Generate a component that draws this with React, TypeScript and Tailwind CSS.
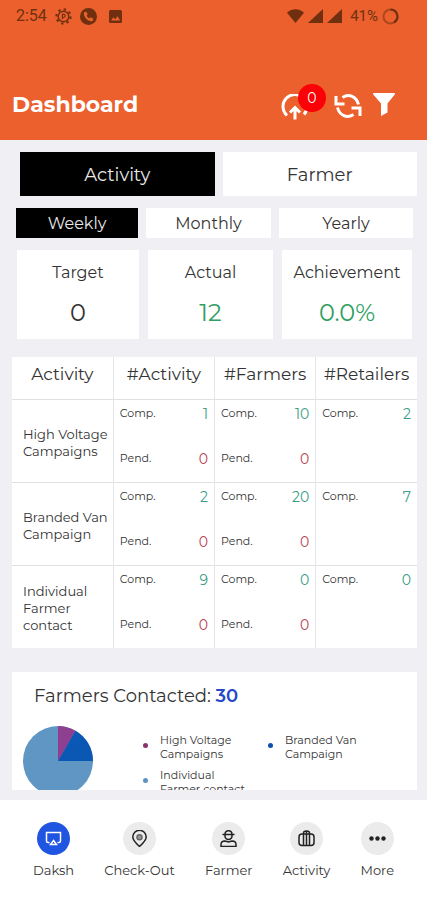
import { useState } from 'react';
import clsx from 'clsx';

const periods = ['Weekly', 'Monthly', 'Yearly'];

const summary = [
  { label: 'Target', value: '0', color: 'text-[#333333]' },
  { label: 'Actual', value: '12', color: 'text-[#2f9e62]' },
  { label: 'Achievement', value: '0.0%', color: 'text-[#2f9e62]' },
];

const rows = [
  { name: 'High Voltage Campaigns', cells: [{ comp: 1, pend: 0 }, { comp: 10, pend: 0 }, { comp: 2 }] },
  { name: 'Branded Van Campaign', cells: [{ comp: 2, pend: 0 }, { comp: 20, pend: 0 }, { comp: 7 }] },
  { name: 'Individual Farmer contact', cells: [{ comp: 9, pend: 0 }, { comp: 0, pend: 0 }, { comp: 0 }] },
];

const legend = [
  { label: 'High Voltage Campaigns', dot: 'bg-[#8a3272]' },
  { label: 'Branded Van Campaign', dot: 'bg-[#0d4fae]' },
  { label: 'Individual Farmer contact', dot: 'bg-[#5b93c4]' },
];

function StatusBar() {
  return (
    <div className="flex items-center justify-between h-8 pl-4 pr-7 text-[#70300f]">
      <div className="flex items-center gap-2">
        <span className="text-base font-['Roboto',sans-serif]">2:54</span>
        <svg width="17" height="17" viewBox="0 0 16 16" fill="none" stroke="currentColor">
          <circle cx="8" cy="8" r="5" strokeWidth="1.4" />
          <circle cx="8" cy="8" r="6.7" strokeWidth="2" strokeDasharray="2.2 3.06" />
          <path d="M7 10.5V6h1.3a1.3 1.3 0 0 1 0 2.7H7" strokeWidth="1.1" />
        </svg>
        <svg width="17" height="17" viewBox="0 0 16 16">
          <circle cx="8" cy="8" r="8" fill="currentColor" />
          <path
            d="M4.3 3.9l1.6-.5 1.3 2.7-1 1.1a6 6 0 0 0 2.6 2.6l1.1-1 2.7 1.3-.5 1.7c-.2.6-.8.8-1.4.7-3.7-.5-6.7-3.5-7.1-7.2 0-.6.2-1.2.7-1.4z"
            fill="#eb602d"
          />
        </svg>
        <svg width="13" height="13" viewBox="0 0 13 13" className="ml-1">
          <rect width="13" height="13" rx="1.5" fill="currentColor" />
          <path d="M2 10.5l2.5-3.2 1.7 2 2.3-3 2.7 4.2z" fill="#eb602d" />
        </svg>
      </div>
      <div className="flex items-center gap-1">
        <svg width="17" height="14" viewBox="0 0 17 14" fill="currentColor">
          <path d="M8.5 14L0 3.7C4.8-.8 12.2-.8 17 3.7z" />
        </svg>
        <svg width="15" height="14" viewBox="0 0 15 14" fill="currentColor">
          <path d="M15 0v14H0z" />
        </svg>
        <svg width="15" height="14" viewBox="0 0 15 14" fill="currentColor">
          <path d="M15 0v14H0z" />
        </svg>
        <span className="ml-1 text-[15px] font-['Roboto',sans-serif]">41%</span>
        <svg width="17" height="17" viewBox="0 0 17 17" fill="none" stroke="currentColor" strokeWidth="2">
          <circle cx="8.5" cy="8.5" r="7" opacity="0.5" />
          <path d="M8.5 1.5a7 7 0 0 1 3.5 13" />
        </svg>
      </div>
    </div>
  );
}

function Header() {
  return (
    <header className="bg-[#eb602d] shrink-0">
      <StatusBar />
      <div className="flex items-center justify-between h-27 pl-3 pr-8 pt-9">
        <h1 className="text-white font-bold text-[22px]">Dashboard</h1>
        <div className="flex items-center gap-[11px] text-white">
          <button aria-label="Upload" className="relative w-[43px] h-7">
            <svg width="30" height="26" viewBox="0 0 30 26" fill="none" stroke="currentColor" strokeWidth="3" className="mt-1">
              <path d="M7 21.5A12 12 0 1 1 24 20.500" />
              <path d="M15 25.500V14M10 18.500l5-5 5 5" />
            </svg>
            <span className="absolute left-[18px] -top-1.5 flex items-center justify-center w-7 h-7 rounded-full bg-[#fb0006] text-sm">
              0
            </span>
          </button>
          <button aria-label="Refresh">
            <svg width="28" height="26" viewBox="0 0 28 26" fill="none" stroke="currentColor" strokeWidth="3" className="mt-1">
              <path d="M2 3v8h8.500M26 23v-8h-8.500" />
              <path d="M8.500 4.500C15 0 22.500 3.500 24.500 11.500M19.500 21.500C13 26 5.500 22.500 3.500 14.500" />
            </svg>
          </button>
          <button aria-label="Filter">
            <svg width="22" height="23" viewBox="0 0 22 23" fill="currentColor">
              <path d="M1 0h20q1.500 0 .8 1.500L14.500 10.500v9L8 23V10.500L.2 1.500Q-.5 0 1 0z" />
            </svg>
          </button>
        </div>
      </div>
    </header>
  );
}

function Count({ label, value, color }: { label: string; value: number; color: string }) {
  return (
    <div className="flex items-center justify-between h-5">
      <span className="text-[11px] text-[#333333]">{label}</span>
      <span className={clsx('text-sm', color)}>{value}</span>
    </div>
  );
}

function ActivityTable() {
  return (
    <table className="w-full table-fixed bg-white">
      <thead>
        <tr className="h-[42px] text-[17px] text-[#333333]">
          {['Activity', '#Activity', '#Farmers', '#Retailers'].map((title) => (
            <th key={title} scope="col" className="p-0 pb-1.5 font-normal border-r border-[#e6e6e8] last:border-r-0">
              {title}
            </th>
          ))}
        </tr>
      </thead>
      <tbody>
        {rows.map((row) => (
          <tr key={row.name} className="h-[83px] border-t border-[#e0e0e2]">
            <th scope="row" className="p-0 pl-[11px] pt-1 text-left font-normal text-[13px] leading-[17px] text-[#333333] border-r border-[#e6e6e8]">
              {row.name}
            </th>
            {row.cells.map((cell, i) => (
              <td key={i} className="px-[6px] py-1 align-top border-r border-[#e6e6e8] last:border-r-0">
                <div className="flex flex-col gap-[25px]">
                  <Count label="Comp." value={cell.comp} color="text-[#3a9c84]" />
                  {cell.pend !== undefined && <Count label="Pend." value={cell.pend} color="text-[#b8404c]" />}
                </div>
              </td>
            ))}
          </tr>
        ))}
      </tbody>
    </table>
  );
}

function FarmersContacted() {
  return (
    <section className="bg-white h-48 pt-3">
      <h2 className="pl-[22px] text-lg leading-6 text-[#333333]">
        Farmers Contacted: <span className="font-semibold text-[#2448c8]">30</span>
      </h2>
      <div className="flex items-start pl-[11px] pt-[18px]">
        <svg width="70" height="70" viewBox="0 0 70 70">
          <circle cx="35" cy="35" r="35" fill="#5f96c4" />
          <path d="M35 35V0A35 35 0 0 1 52.5 4.7z" fill="#8f3f90" />
          <path d="M35 35L52.5 4.7A35 35 0 0 1 70 35z" fill="#0a57b4" />
        </svg>
        <ul className="grid grid-cols-2 gap-y-[7px] flex-1 pl-[50px] pr-6 pt-[7px]">
          {legend.map((item) => (
            <li key={item.label} className="flex items-start gap-3 text-[11px] leading-[14px] text-[#333333]">
              <span className={clsx('mt-[10px] w-[5px] h-[5px] rounded-full shrink-0', item.dot)} />
              <span className="w-24">{item.label}</span>
            </li>
          ))}
        </ul>
      </div>
    </section>
  );
}

const navItems = [
  {
    label: 'Daksh',
    icon: (
      <>
        <path d="M4.500 12.500H3q-1.500 0-1.500-1.500V2.500h14V11q0 1.500-1.500 1.500h-1.500" />
        <path d="M8.500 10.500l3 4h-6z" />
      </>
    ),
  },
  {
    label: 'Check-Out',
    icon: (
      <>
        <path d="M8.500 16.500C4 12.500 1.800 10 1.800 7a6.700 6.700 0 0 1 13.400 0c0 3-2.200 5.500-6.700 9.500z" />
        <circle cx="8.500" cy="7.200" r="2.500" fill="#999999" stroke="#666666" />
      </>
    ),
  },
  {
    label: 'Farmer',
    icon: (
      <>
        <path d="M2.500 4.500h12M5 4.500c0-5 7-5 7 0" />
        <path d="M5 4.500v1.500a3.500 3.500 0 0 0 7 0V4.500M1 16.500v-2q0-3.500 4-3.500l3.500 1 3.500-1q4 0 4 3.500v2z" />
      </>
    ),
  },
  {
    label: 'Activity',
    icon: (
      <>
        <rect x="1" y="4" width="15" height="11.500" rx="3" />
        <path d="M5.500 15.500V3q0-2 3-2t3 2v12.500M8.500 1v14.500" />
      </>
    ),
  },
  {
    label: 'More',
    icon: (
      <g fill="currentColor" stroke="none">
        <circle cx="2.500" cy="8.500" r="2.200" />
        <circle cx="8.500" cy="8.500" r="2.200" />
        <circle cx="14.500" cy="8.500" r="2.200" />
      </g>
    ),
  },
];

function BottomNav() {
  return (
    <nav className="flex items-start justify-between h-[100px] shrink-0 px-[33px] pt-[22px] bg-white">
      {navItems.map((item, i) => (
        <a key={item.label} href="#" className="flex flex-col items-center gap-[5px] text-[13px] leading-5 text-[#333333]">
          <span
            className={clsx(
              'flex items-center justify-center w-[33px] h-[33px] rounded-full',
              i === 0 ? 'bg-[#1f55e0] text-white' : 'bg-[#ebebeb] text-[#222222]'
            )}
          >
            <svg width="17" height="17" viewBox="0 0 17 17" fill="none" stroke="currentColor" strokeWidth="1.5">
              {item.icon}
            </svg>
          </span>
          {item.label}
        </a>
      ))}
    </nav>
  );
}

export default function App() {
  const [tab, setTab] = useState('Activity');
  const [period, setPeriod] = useState('Weekly');

  return (
    <div className="flex flex-col h-screen bg-[#f0f0f4] font-['Montserrat','Inter',sans-serif]">
      <Header />
      <main className="flex-1 min-h-0 overflow-y-auto [scrollbar-width:none] mb-[10px]">
        <div className="grid grid-cols-2 gap-2 pt-3 pl-5 pr-[10px]">
          {['Activity', 'Farmer'].map((name) => (
            <button
              key={name}
              onClick={() => setTab(name)}
              className={clsx('h-11 pt-0.5 text-lg', tab === name ? 'bg-black text-[#e8e8e8]' : 'bg-white text-[#333333]')}
            >
              {name}
            </button>
          ))}
        </div>
        <div className="grid grid-cols-[122fr_125fr_134fr] gap-2 pt-3 pl-4 pr-[14px]">
          {periods.map((name) => (
            <button
              key={name}
              onClick={() => setPeriod(name)}
              className={clsx('h-[30px] pt-0.5 text-base', period === name ? 'bg-black text-[#e8e8e8]' : 'bg-white text-[#333333]')}
            >
              {name}
            </button>
          ))}
        </div>
        <div className="grid grid-cols-[122fr_125fr_130fr] gap-[9px] pt-3 pl-[17px] pr-[15px]">
          {summary.map((item) => (
            <div key={item.label} className="flex flex-col items-center gap-3 h-[89px] pt-[11px] bg-white">
              <span className="text-base text-[#333333]">{item.label}</span>
              <span className={clsx('text-2xl leading-8', item.color)}>{item.value}</span>
            </div>
          ))}
        </div>
        <div className="pt-[18px] pl-3 pr-[10px]">
          <ActivityTable />
        </div>
        <div className="pt-6 pl-3 pr-[10px]">
          <FarmersContacted />
        </div>
      </main>
      <BottomNav />
    </div>
  );
}
